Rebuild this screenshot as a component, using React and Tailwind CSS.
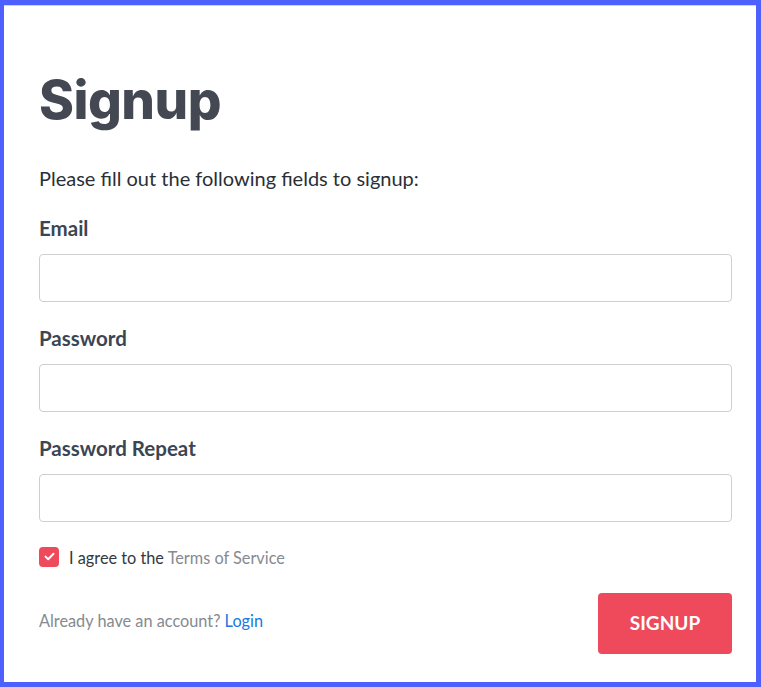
import React from "react";

export default function App() {
  return (
    <div className="w-[761px] h-[687px] bg-[#4d5ffc] pl-[4px] pt-[5px] pr-[5px] pb-[5px]">
      <div className="w-full h-full bg-white border-t border-[#c9d1fb] pl-[35px] pr-[24px] pt-[62px]" style={{ fontFamily: "Lato, 'Open Sans', sans-serif" }}>
        <h1 className="text-[53px] leading-[64px] font-extrabold text-[#434852] tracking-[-0.5px]" style={{ fontFamily: "Inter, sans-serif" }}>Signup</h1>
        <p className="mt-[32px] text-[20px] leading-[28px] text-[#2a2f36]">Please fill out the following fields to signup:</p>
        <div className="mt-[22px] flex flex-col">
          {["Email", "Password", "Password Repeat"].map((l, i) => (
            <div key={l} className={i === 0 ? "" : "mt-[22px]"}>
              <label className="block text-[20.5px] leading-[28px] font-bold text-[#3b4654]">{l}</label>
              <input type={l === "Email" ? "email" : "password"} className="mt-[12px] block w-full h-[48px] rounded-[4px] border border-[#cfcfcf] bg-white outline-none" />
            </div>
          ))}
        </div>
        <div className="mt-[24px] flex items-center gap-[10px] h-[24px]">
          <span className="w-[20px] h-[20px] -mt-[3px] rounded-[4px] bg-[#ee4a5b] flex items-center justify-center">
            <svg width="11" height="9" viewBox="0 0 11 9"><path d="M1.5 4.6 L4.2 7.2 L9.5 1.8" fill="none" stroke="white" strokeWidth="2" strokeLinecap="round" strokeLinejoin="round" /></svg>
          </span>
          <span className="text-[16.3px] leading-[24px] text-[#333840]">I agree to the <span className="text-[#858a90]">Terms of Service</span></span>
        </div>
        <div className="mt-[23px] flex items-center justify-between">
          <span className="mb-[5px] text-[16.3px] leading-[24px] text-[#858a90]">Already have an account? <a className="text-[#2177e0]">Login</a></span>
          <button className="w-[134px] h-[61px] rounded-[4px] bg-[#ee4a5b] text-white text-[19px] font-bold">SIGNUP</button>
        </div>
      </div>
    </div>
  );
}
